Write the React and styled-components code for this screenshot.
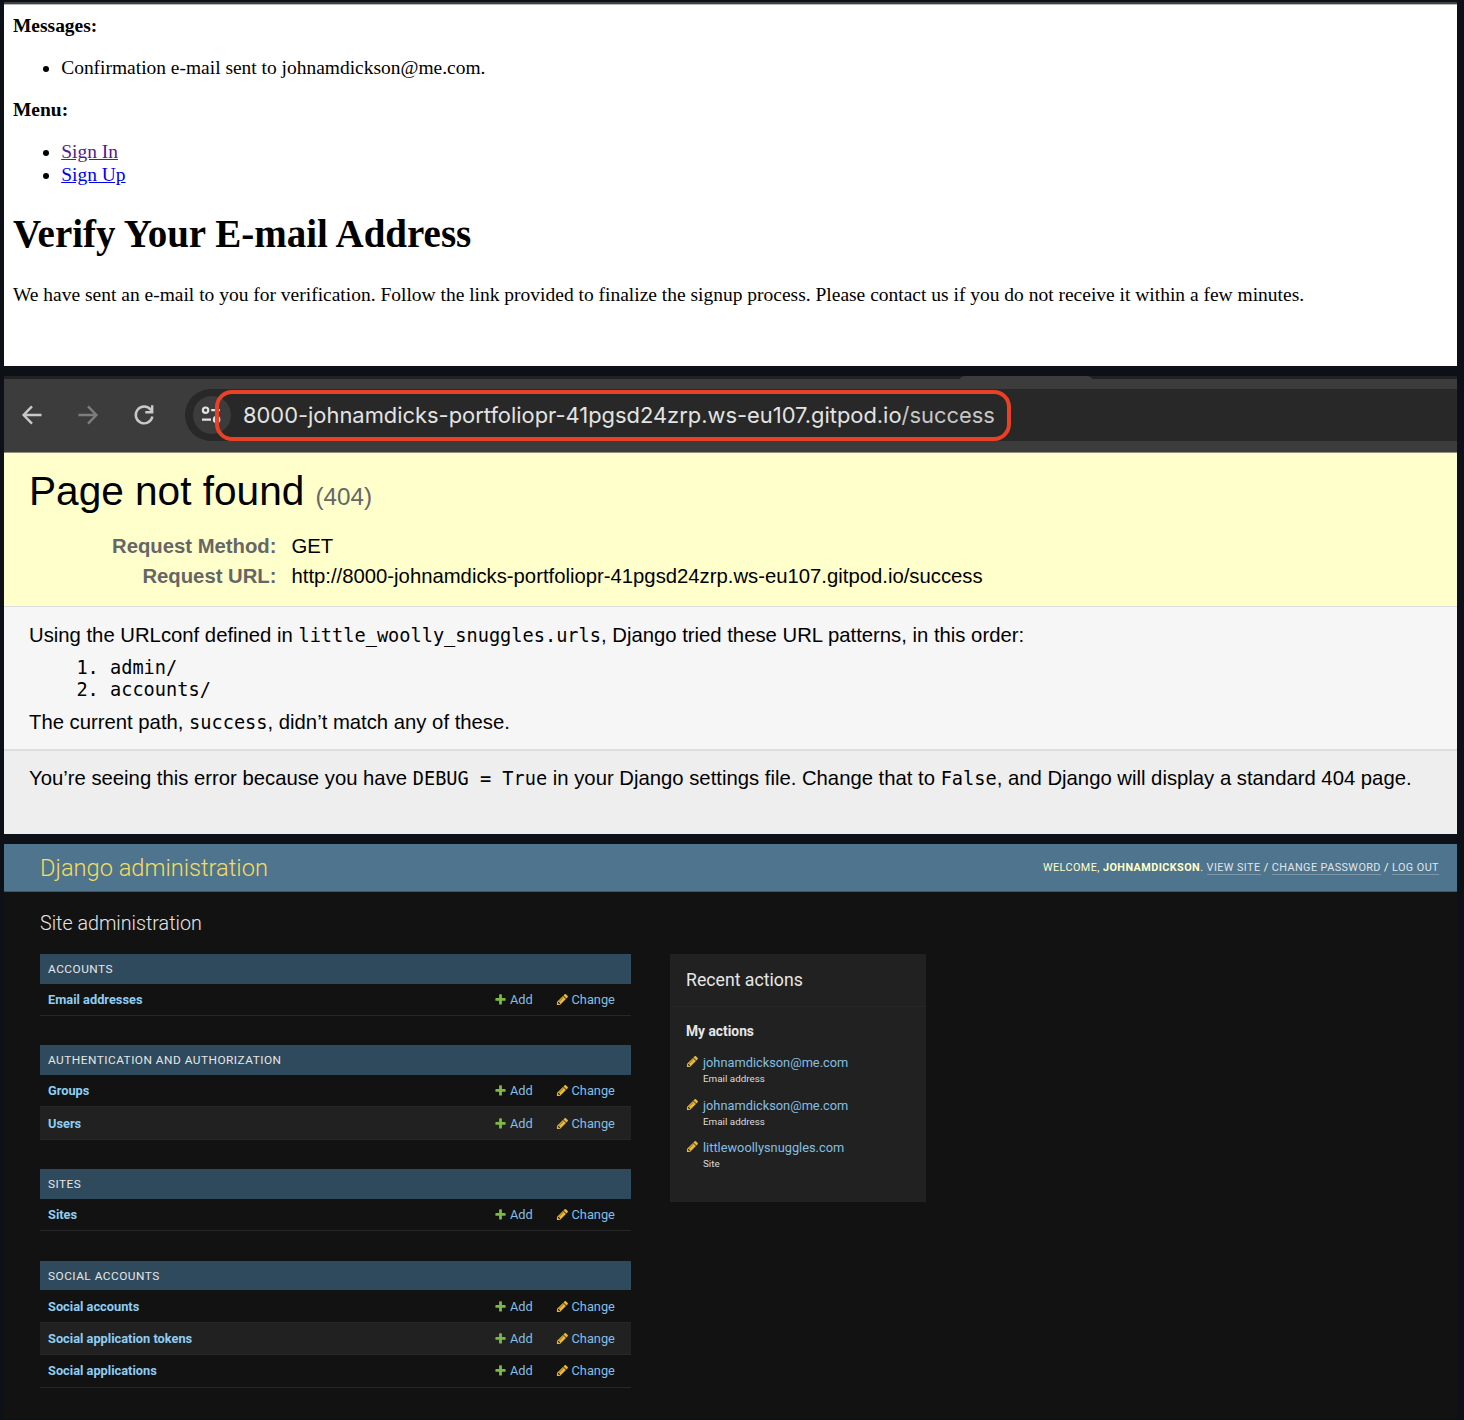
import React from "react";
import styled, { createGlobalStyle } from "styled-components";

const Global = createGlobalStyle`
  * { box-sizing: border-box; }
  body { margin: 0; background: #0d1117; }
  h1, h2, h3, p, ul, ol { margin: 0; padding: 0; font-weight: 400; }
  a { color: inherit; text-decoration: none; }
`;

const Stack = styled.main`
  display: flex;
  flex-direction: column;
  gap: 10px;
  width: 1464px;
  height: 1420px;
  padding: 2px 7px 1px 4px;
  overflow: hidden;
`;

/* Verification page */
const VerifyPage = styled.section`
  height: 364px;
  flex: none;
  padding: 11px 9px 0;
  border-top: 2px solid #404242;
  box-shadow: inset 0 1px 0 #b8baba;
  background: #fff;
  color: #000;
  font: 19.47px/22.6px "Liberation Serif", serif;
`;
const Label = styled.strong`
  display: block;
  font-weight: 700;
`;
const Bullets = styled.ul`
  margin: 19.5px 0;
  padding-left: 48.2px;
`;
const TextLink = styled.a`
  color: ${(p) => (p.$visited ? "#551a8b" : "#0000ee")};
  text-decoration: underline;
`;
const VerifyTitle = styled.h1`
  margin: 26px 0 28px;
  font-size: 39px;
  line-height: 44px;
  font-weight: 700;
`;
const VerifyText = styled.p`
  font-size: 19.49px;
  white-space: nowrap;
`;

/* Browser window with the 404 page */
const Browser = styled.section`
  height: 458px;
  flex: none;
  display: flex;
  flex-direction: column;
  background: #eee;
`;
const TabStrip = styled.div`
  display: flex;
  height: 3px;
  padding-left: 956px;
  background: #202121;
`;
const ActiveTab = styled.div`
  width: 132px;
  background: #3c3c3c;
  border-radius: 6px 6px 0 0 / 3px 3px 0 0;
`;
const Toolbar = styled.div`
  display: flex;
  align-items: center;
  height: 74px;
  padding: 0 0 1px 16px;
  background: #3c3c3c;
  border-bottom: 1px solid #8f8f7c;
`;
const ToolButton = styled.span`
  display: flex;
  justify-content: center;
  width: 24px;
  margin-right: 32px;
  color: ${(p) => (p.$off ? "#7d7d7d" : "#c9c9c9")};
`;
const Omnibox = styled.div`
  position: relative;
  flex: 1;
  display: flex;
  align-items: center;
  height: 52px;
  margin-left: -3px;
  padding-left: 8px;
  border-radius: 26px 0 0 26px;
  background: #282828;
`;
const SiteControls = styled.span`
  display: flex;
  align-items: center;
  justify-content: center;
  width: 38px;
  height: 38px;
  border-radius: 50%;
  background: #3c3c3c;
  color: #e3e3e3;
`;
const Url = styled.span`
  margin-left: 12px;
  color: #e3e3e3;
  font: 21.9px/30px Inter, sans-serif;
  white-space: nowrap;
`;
const UrlPath = styled.span`
  color: #c7c7c7;
`;
const Highlight = styled.div`
  position: absolute;
  left: 30px;
  top: 1px;
  width: 796px;
  height: 51px;
  border: 4px solid #ea4126;
  border-radius: 17px;
`;
const Summary = styled.header`
  height: 154px;
  padding: 14px 25px 0;
  background: #ffffcc;
  border-bottom: 1px solid #ddd;
  color: #000;
  font: 20.3px/30px "Liberation Sans", sans-serif;
`;
const ErrorTitle = styled.h1`
  font-size: 40.6px;
  line-height: 48px;
  margin-bottom: 10px;
`;
const Status = styled.small`
  font-size: 24.2px;
  color: #666;
`;
const Meta = styled.dl`
  display: grid;
  grid-template-columns: 247.5px 1fr;
  column-gap: 15px;
  margin: 0;
`;
const MetaName = styled.dt`
  text-align: right;
  font-weight: 700;
  color: #666;
`;
const MetaValue = styled.dd`
  margin: 0;
  white-space: nowrap;
`;
const Info = styled.div`
  height: 144px;
  padding: 16px 25px 0;
  background: #f6f6f6;
  border-bottom: 2px solid #ddd;
  color: #000;
  font: 20.3px/24px "Liberation Sans", sans-serif;
`;
const Explanation = styled(Info)`
  flex: 1;
  height: auto;
  padding-top: 15px;
  background: #eee;
  border: 0;
`;
const Line = styled.p`
  white-space: nowrap;
`;
const Code = styled.code`
  font: 18.63px/20px "DejaVu Sans Mono", monospace;
`;
const Patterns = styled.ol`
  margin: 10px 0 9px;
  padding-left: 81px;
  font: 18.63px/22px "DejaVu Sans Mono", monospace;
`;

/* Admin site */
const Admin = styled.section`
  flex: 1;
  background: #121212;
  color: #e6e6e6;
  font: 12.8px/16px Roboto, sans-serif;
`;
const AdminHeader = styled.header`
  display: flex;
  align-items: center;
  justify-content: space-between;
  height: 48px;
  padding: 0 18px 0 36px;
  border-bottom: 1px solid #36586c;
  background: #4f748e;
`;
const SiteName = styled.h1`
  font-size: 23.64px;
  line-height: 28px;
  font-weight: 300;
  color: #f5dd5d;
`;
const UserTools = styled.div`
  padding-top: 1px;
  font-size: 10.83px;
  letter-spacing: 0.43px;
  text-transform: uppercase;
  color: #ffffcc;
  strong { font-weight: 700; }
`;
const ToolLink = styled.a`
  border-bottom: 1px solid rgba(255, 255, 255, 0.25);
  color: #dfe7ec;
`;
const AdminBody = styled.div`
  padding: 20px 36px 0;
`;
const PageTitle = styled.h2`
  font-size: 19.7px;
  line-height: 24px;
  font-weight: 300;
`;
const Columns = styled.div`
  display: flex;
  align-items: flex-start;
  gap: 39.5px;
  margin-top: 18px;
`;
const Modules = styled.div`
  display: flex;
  flex-direction: column;
  gap: 29.5px;
  width: 590.5px;
`;
const Caption = styled.h3`
  height: 29.6px;
  padding: 1px 0 0 8px;
  background: #2f4a5c;
  font-size: 11.83px;
  line-height: 29px;
  letter-spacing: 0.49px;
  text-transform: uppercase;
`;
const ModelRow = styled.div`
  display: flex;
  align-items: center;
  height: 32.4px;
  padding: 1px 0 0 8px;
  border-bottom: 1px solid #272727;
  background: ${(p) => (p.$even ? "#212121" : "transparent")};
`;
const ModelName = styled.a`
  flex: 1;
  font-weight: 700;
  color: #8fcdf2;
`;
const Action = styled.a`
  display: flex;
  align-items: center;
  gap: 3px;
  width: ${(p) => p.$width}px;
  color: #84bfe2;
  svg { margin-top: -1px; }
`;
const Recent = styled.aside`
  width: 256px;
  height: 248px;
  background: #212121;
`;
const RecentTitle = styled.h2`
  height: 53px;
  padding-left: 16px;
  border-bottom: 1px solid #272727;
  font-size: 17.7px;
  line-height: 52px;
`;
const RecentBody = styled.div`
  padding: 16px 16px 0;
`;
const MyActions = styled.h3`
  font-size: 13.8px;
  font-weight: 700;
  line-height: 16px;
  margin-bottom: 16.4px;
`;
const Entry = styled.div`
  display: grid;
  grid-template-columns: 17px 1fr;
  align-content: start;
  height: 42.5px;
  color: #84bfe2;
`;
const EntryKind = styled.span`
  grid-column: 2;
  font-size: 9.85px;
  line-height: 14px;
  margin-top: 1px;
  color: #ddd;
`;
const Glyph = styled.svg`
  display: block;
  flex: none;
  overflow: visible;
`;

const Plus = () => (
  <Glyph width="13" height="13" viewBox="0 0 1792 1792" fill="#7dba45">
    <path d="M1600 796v192q0 40-28 68t-68 28h-416v416q0 40-28 68t-68 28h-192q-40 0-68-28t-28-68v-416h-416q-40 0-68-28t-28-68v-192q0-40 28-68t68-28h416v-416q0-40 28-68t68-28h192q40 0 68 28t28 68v416h416q40 0 68 28t28 68z" />
  </Glyph>
);
const Pencil = () => (
  <Glyph width="13" height="13" viewBox="0 0 1792 1792" fill="#e9b93a">
    <path d="M491 1536l91-91-235-235-91 91v107h128v128h107zm523-928q0-22-22-22-10 0-17 7l-542 542q-7 7-7 17 0 22 22 22 10 0 17-7l542-542q7-7 7-17zm-54-192l416 416-832 832h-416v-416zm683 96q0 53-37 90l-166 166-416-416 166-165q36-38 90-38 53 0 91 38l235 234q37 39 37 91z" />
  </Glyph>
);
const Arrow = ({ flip }) => (
  <Glyph width="20" height="20" viewBox="0 0 20 20" fill="none" stroke="currentColor" strokeWidth="2.4">
    <path d={flip ? "M.5 10H18M10 1.3 18.4 10 10 18.7" : "M19.5 10H2M10 1.3 1.6 10 10 18.7"} />
  </Glyph>
);
const Reload = () => (
  <Glyph width="20" height="20" viewBox="0 0 20 20" fill="none" stroke="currentColor" strokeWidth="2.4">
    <path d="M18.4 11.5A8.4 8.4 0 1 1 16.8 4.8L18 6.5M18.2.3V7.2H11.3" />
  </Glyph>
);
const Tune = () => (
  <Glyph width="20" height="18" viewBox="0 0 20 18" fill="none" stroke="currentColor" strokeWidth="2.2">
    <circle cx="3.6" cy="4.2" r="2.7" />
    <path d="M9.2 4.2H18M0 13.6H9" />
    <circle cx="14.6" cy="13.6" r="2.7" />
  </Glyph>
);

const modules = [
  { name: "Accounts", models: ["Email addresses"] },
  { name: "Authentication and Authorization", models: ["Groups", "Users"] },
  { name: "Sites", models: ["Sites"] },
  { name: "Social Accounts", models: ["Social accounts", "Social application tokens", "Social applications"] },
];
const actions = [
  ["johnamdickson@me.com", "Email address"],
  ["johnamdickson@me.com", "Email address"],
  ["littlewoollysnuggles.com", "Site"],
];

export default function App() {
  return (
    <Stack>
      <Global />
      <VerifyPage>
        <Label>Messages:</Label>
        <Bullets>
          <li>Confirmation e-mail sent to johnamdickson@me.com.</li>
        </Bullets>
        <Label>Menu:</Label>
        <Bullets>
          <li><TextLink href="#" $visited>Sign In</TextLink></li>
          <li><TextLink href="#">Sign Up</TextLink></li>
        </Bullets>
        <VerifyTitle>Verify Your E-mail Address</VerifyTitle>
        <VerifyText>
          We have sent an e-mail to you for verification. Follow the link provided to finalize the signup process. Please contact us if you do not receive it within a few minutes.
        </VerifyText>
      </VerifyPage>

      <Browser>
        <TabStrip><ActiveTab /></TabStrip>
        <Toolbar>
          <ToolButton><Arrow /></ToolButton>
          <ToolButton $off><Arrow flip /></ToolButton>
          <ToolButton><Reload /></ToolButton>
          <Omnibox>
            <SiteControls><Tune /></SiteControls>
            <Url>8000-johnamdicks-portfoliopr-41pgsd24zrp.ws-eu107.gitpod.io<UrlPath>/success</UrlPath></Url>
            <Highlight />
          </Omnibox>
        </Toolbar>
        <Summary>
          <ErrorTitle>Page not found <Status>(404)</Status></ErrorTitle>
          <Meta>
            <MetaName>Request Method:</MetaName>
            <MetaValue>GET</MetaValue>
            <MetaName>Request URL:</MetaName>
            <MetaValue>http://8000-johnamdicks-portfoliopr-41pgsd24zrp.ws-eu107.gitpod.io/success</MetaValue>
          </Meta>
        </Summary>
        <Info>
          <Line>Using the URLconf defined in <Code>little_woolly_snuggles.urls</Code>, Django tried these URL patterns, in this order:</Line>
          <Patterns>
            <li>admin/</li>
            <li>accounts/</li>
          </Patterns>
          <Line>The current path, <Code>success</Code>, didn’t match any of these.</Line>
        </Info>
        <Explanation>
          <Line>You’re seeing this error because you have <Code>DEBUG = True</Code> in your Django settings file. Change that to <Code>False</Code>, and Django will display a standard 404 page.</Line>
        </Explanation>
      </Browser>

      <Admin>
        <AdminHeader>
          <SiteName>Django administration</SiteName>
          <UserTools>
            Welcome, <strong>johnamdickson</strong>. <ToolLink href="#">View site</ToolLink> / <ToolLink href="#">Change password</ToolLink> / <ToolLink href="#">Log out</ToolLink>
          </UserTools>
        </AdminHeader>
        <AdminBody>
          <PageTitle>Site administration</PageTitle>
          <Columns>
            <Modules>
              {modules.map((m) => (
                <div key={m.name}>
                  <Caption>{m.name}</Caption>
                  {m.models.map((model, i) => (
                    <ModelRow key={model} $even={i % 2 === 1}>
                      <ModelName href="#">{model}</ModelName>
                      <Action href="#" $width={61.5}><Plus />Add</Action>
                      <Action href="#" $width={75}><Pencil />Change</Action>
                    </ModelRow>
                  ))}
                </div>
              ))}
            </Modules>
            <Recent>
              <RecentTitle>Recent actions</RecentTitle>
              <RecentBody>
                <MyActions>My actions</MyActions>
                {actions.map(([title, kind], i) => (
                  <Entry key={i}>
                    <Pencil />
                    <a href="#">{title}</a>
                    <EntryKind>{kind}</EntryKind>
                  </Entry>
                ))}
              </RecentBody>
            </Recent>
          </Columns>
        </AdminBody>
      </Admin>
    </Stack>
  );
}
